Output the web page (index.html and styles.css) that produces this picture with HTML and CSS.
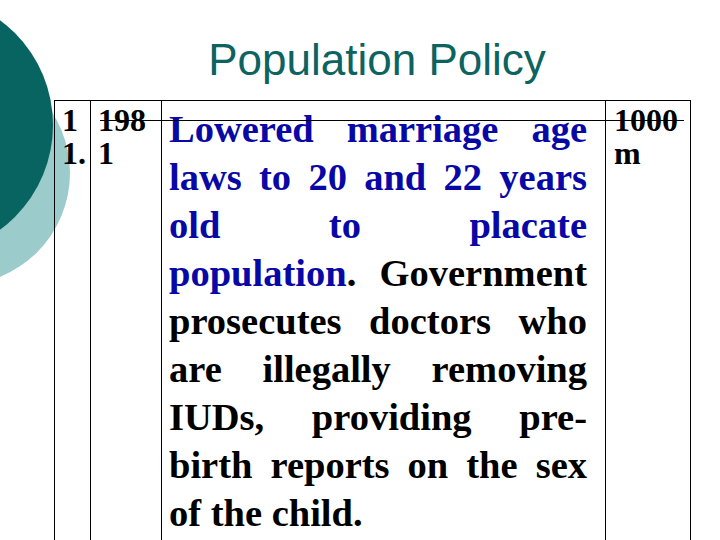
FILE: index.html
```html
<!DOCTYPE html>
<html>
<head>
<meta charset="utf-8">
<link rel="stylesheet" href="styles.css">
</head>
<body>
<svg class="decor" width="120" height="300" viewBox="0 0 120 300">
  <circle cx="-42" cy="173" r="112" fill="#9ccbcb"/>
  <circle cx="-77" cy="125" r="130" fill="#076461"/>
</svg>
<div class="slide">
  <h1 class="title">Population Policy</h1>
  <table class="grid">
    <colgroup>
      <col class="c1"><col class="c2"><col class="c3"><col class="c4">
    </colgroup>
    <tr>
      <td class="small">1<br>1.</td>
      <td class="small">198<br>1</td>
      <td class="main">
        <span class="ln blue">Lowered marriage age</span>
        <span class="ln blue">laws to 20 and 22 years</span>
        <span class="ln blue">old to placate</span>
        <span class="ln"><span class="blue">population</span>. Government</span>
        <span class="ln">prosecutes doctors who</span>
        <span class="ln">are illegally removing</span>
        <span class="ln">IUDs, providing pre-</span>
        <span class="ln">birth reports on the sex</span>
        <span class="ln last">of the child.</span>
      </td>
      <td class="small right">1000<br>m</td>
    </tr>
  </table>
  <div class="stray"></div>
</div>
</body>
</html>
```
FILE: styles.css
```css
html, body {
  margin: 0;
  padding: 0;
  width: 720px;
  height: 540px;
  overflow: hidden;
  background: #fff;
}
.decor {
  position: absolute;
  left: 0;
  top: 0;
}
.slide {
  position: relative;
  width: 720px;
  height: 540px;
  overflow: hidden;
}
.title {
  margin: 0 0 0 54px;
  width: 646px;
  height: 100px;
  box-sizing: border-box;
  padding-top: 35px;
  font-family: "Liberation Sans", Arial, sans-serif;
  font-weight: normal;
  font-size: 44px;
  line-height: 50px;
  color: #0d6360;
  text-align: center;
}
.grid {
  margin-left: 54px;
  border-collapse: collapse;
  table-layout: fixed;
  width: 636px;
  height: 444px;
  font-family: "Liberation Serif", "Times New Roman", serif;
  font-weight: bold;
}
.c1 { width: 36px; }
.c2 { width: 71px; }
.c3 { width: 444px; }
.c4 { width: 85px; }
.grid td {
  border: 1px solid #000;
  vertical-align: top;
  padding: 0;
}
.small {
  font-size: 32px;
  line-height: 33px;
  padding: 3px 0 0 7px !important;
}
.main {
  font-size: 38.5px;
  line-height: 48px;
  padding: 4px 18px 0 7px !important;
}
.ln {
  display: block;
  text-align: justify;
  text-align-last: justify;
}
.ln.last {
  text-align-last: left;
}
.blue {
  color: #0808a6;
}
.right {
  padding-left: 8px !important;
}
.stray {
  position: absolute;
  left: 100px;
  top: 120px;
  width: 584px;
  height: 1px;
  background: #000;
}
```
